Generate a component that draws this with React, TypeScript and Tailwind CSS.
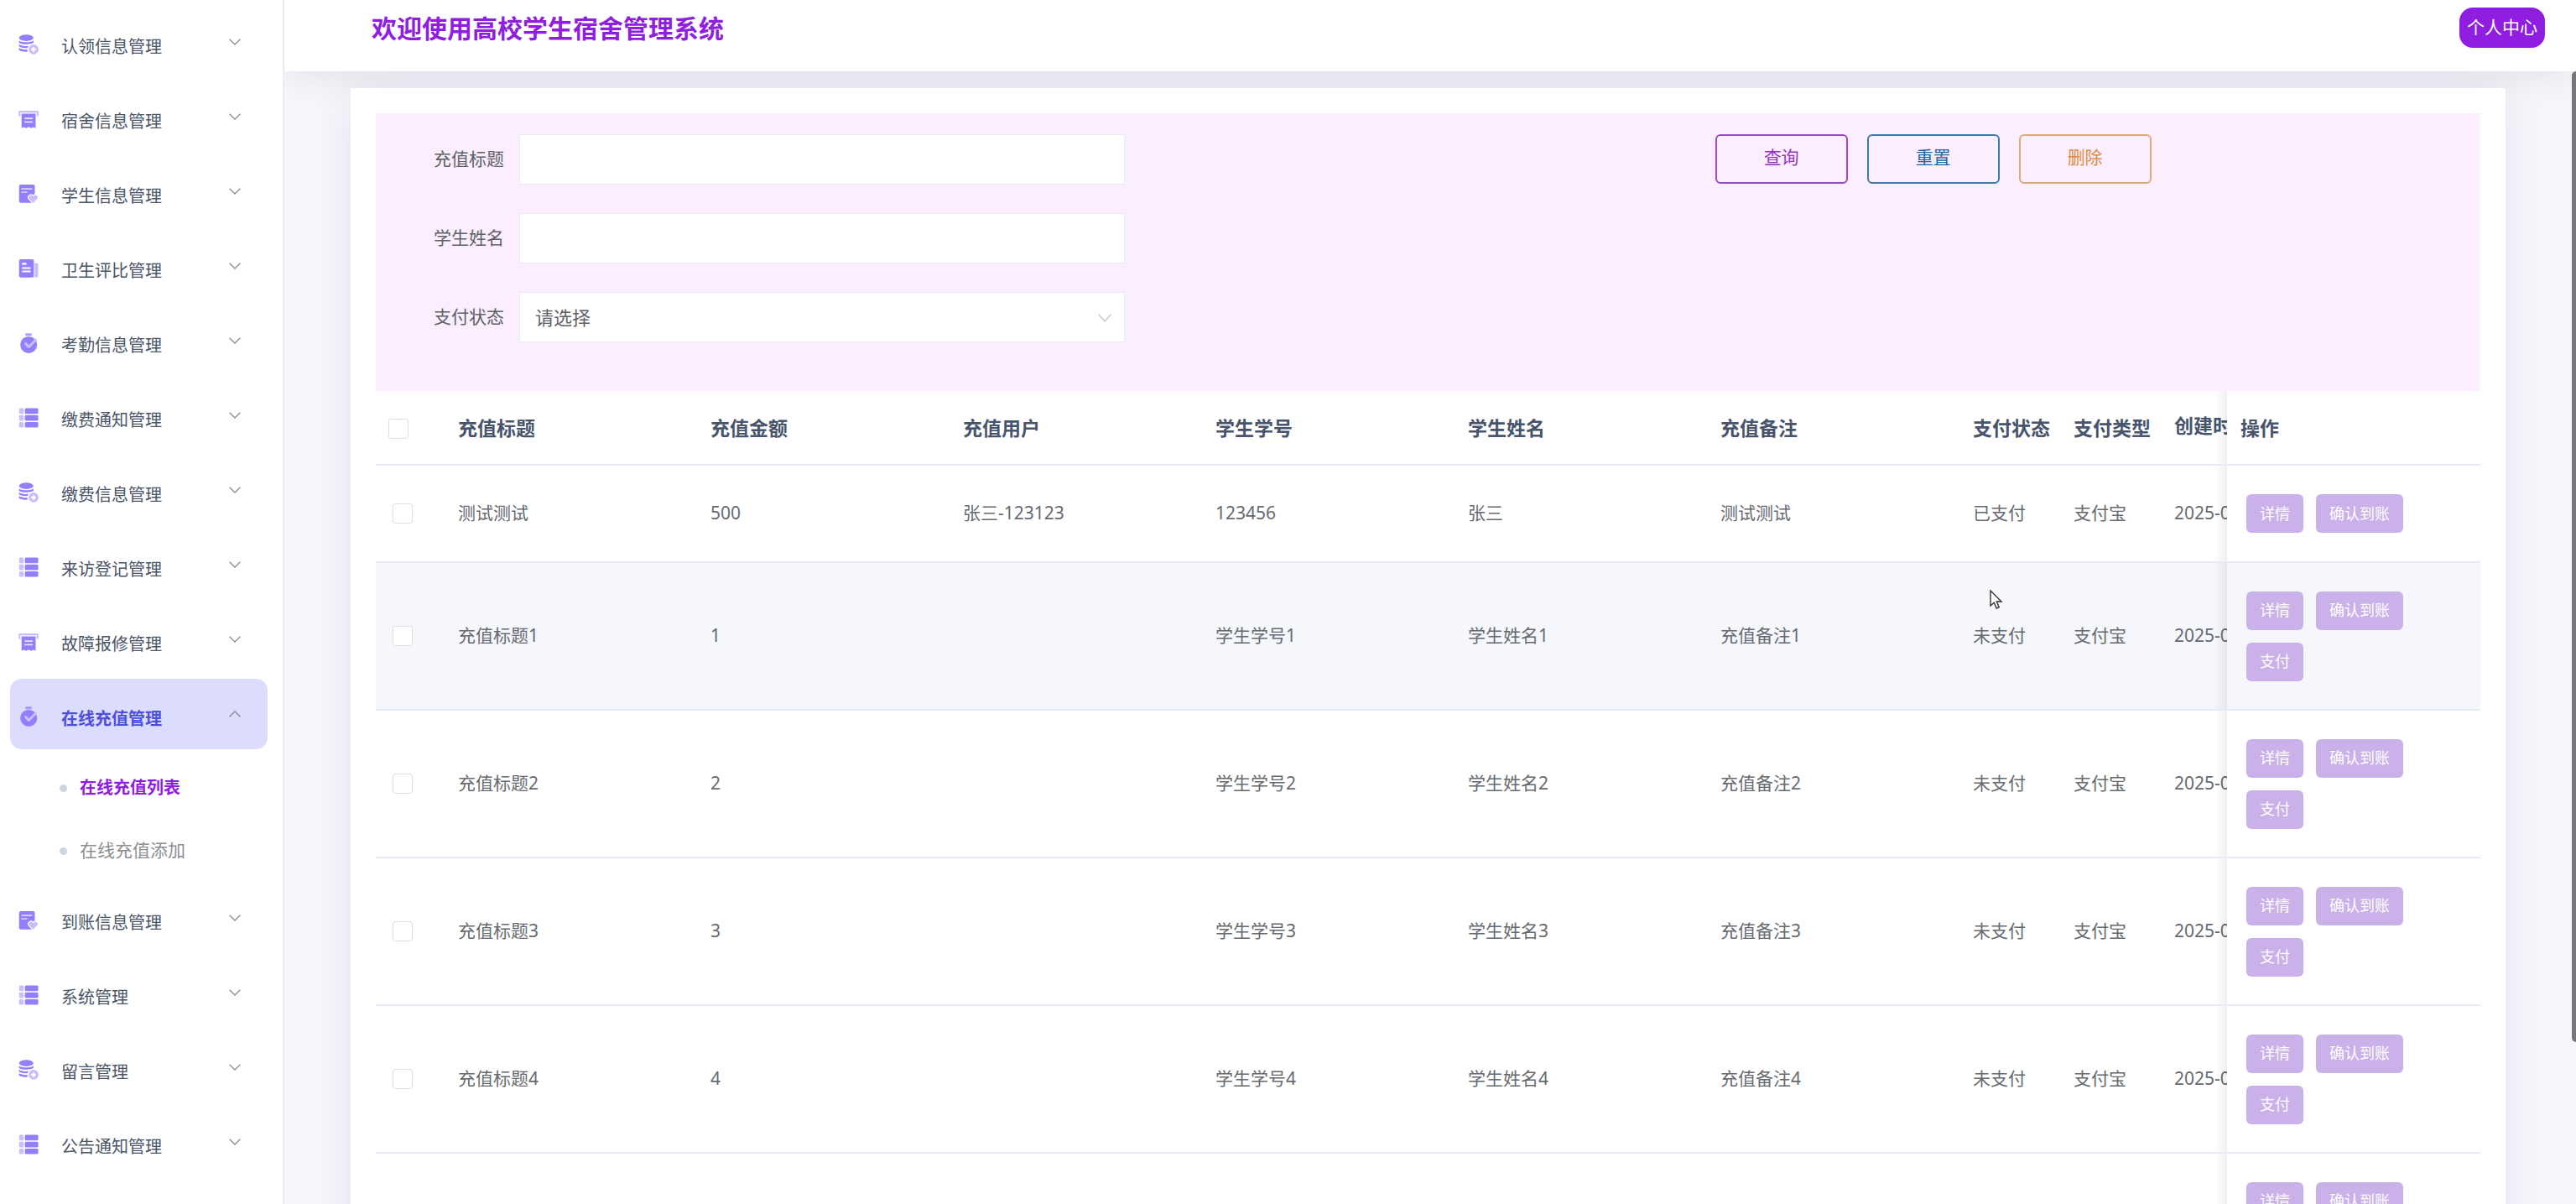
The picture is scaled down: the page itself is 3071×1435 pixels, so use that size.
import type { ReactNode } from "react";

const DARK = "#9280fb";
const LIGHT = "#cdbcfb";

function CoinsIcon() {
  return (
    <svg viewBox="0 0 24 24" className="size-6">
      <ellipse cx="9.3" cy="4.1" rx="8.6" ry="3.8" fill={DARK} />
      <path d="M.6 7.2C3.2 10 15.4 10 18 7.2V9.7C16.5 10.7 14 11.2 12 11.5C7.5 12.1 2.5 11.6.6 9.7Z" fill={DARK} />
      <path d="M.6 11.8C3 13.7 7.5 14.3 11.8 13.6L10.9 16C7 16.5 2.5 15.9.6 14.2Z" fill={DARK} />
      <path d="M.6 16.1C3 17.8 6.5 18.3 10.5 18.1L10.9 20.5C7 21.1 2 20.3.6 18.5Z" fill={DARK} />
      <circle cx="18" cy="17.9" r="4.4" fill="#fff" stroke={LIGHT} strokeWidth="3" />
      <path d="M14.9 14.8L16.6 16.5M21.1 14.8L19.4 16.5M14.9 21L16.6 19.3M21.1 21L19.4 19.3" stroke={LIGHT} strokeWidth="2" />
    </svg>
  );
}

function ReceiptIcon() {
  return (
    <svg viewBox="0 0 24 24" className="size-6">
      <path d="M1.3 8.4V3.2H22.7V8.4" fill="none" stroke={LIGHT} strokeWidth="2.2" strokeLinejoin="round" />
      <path d="M3.7 5.6H20.5V22.8L17.7 21.6L15.3 22.8L12.2 21.3L9 22.8L6.3 21.6L3.7 22.8Z" fill={DARK} />
      <path d="M7.2 11.2H17M7.2 15.3H17" stroke="#e9e2ff" strokeWidth="1.7" />
    </svg>
  );
}

function FileHeartIcon() {
  return (
    <svg viewBox="0 0 24 24" className="size-6">
      <rect x=".8" y="1" width="18.7" height="21.7" rx="2" fill={DARK} />
      <path d="M4.2 6.1H15.8M4.2 10H9.8" stroke="#dfd6ff" strokeWidth="1.7" strokeLinecap="round" />
      <path
        d="M17.6 23.6L12.5 18.4C9.8 15 14.2 11.2 17.6 14.1C21 11.2 25.4 15 22.7 18.4Z"
        fill={LIGHT}
        stroke="#fff"
        strokeWidth="1.2"
      />
    </svg>
  );
}

function NewsIcon() {
  return (
    <svg viewBox="0 0 24 24" className="size-6">
      <path d="M19.3 5.4H21.8Q23.5 5.4 23.5 7.2V20.8Q23.5 22.8 21.8 22.8H19.3Z" fill={LIGHT} />
      <rect x=".8" y="1" width="17.6" height="21.8" rx="2" fill={DARK} />
      <path d="M4.3 11.5H14.5M4.3 15.5H14.5" stroke="#fff" strokeWidth="1.8" />
      <path d="M4.3 5.2H9.5V7.6H4.3Z" fill="#fff" />
    </svg>
  );
}

function TimerIcon() {
  return (
    <svg viewBox="0 0 24 24" className="size-6">
      <rect x="8.2" y=".2" width="7.6" height="3" rx=".8" fill={DARK} opacity=".75" />
      <circle cx="12.2" cy="13.9" r="10" fill={DARK} />
      <path d="M8.6 12.6L12.4 16.5L20.5 8.2" fill="none" stroke={LIGHT} strokeWidth="3" strokeLinecap="round" strokeLinejoin="round" />
    </svg>
  );
}

function ListIcon() {
  return (
    <svg viewBox="0 0 24 24" className="size-6">
      {[0.6, 8.8, 17].map((y) => (
        <g key={y}>
          <rect x=".8" y={y} width="5.4" height="6.6" rx="1.5" fill={LIGHT} />
          <rect x="7.6" y={y} width="16" height="6.6" rx="1.5" fill={DARK} />
        </g>
      ))}
    </svg>
  );
}

function Chevron({ up = false }: { up?: boolean }) {
  return (
    <svg viewBox="0 0 14 8" className="ml-auto h-2 w-3.5 shrink-0" fill="none" stroke="#8b8e96" strokeWidth="1.3">
      <path d={up ? "M.6 7.3L7 1L13.4 7.3" : "M.6 .7L7 7L13.4 .7"} />
    </svg>
  );
}

type MenuItem = { label: string; icon: ReactNode; children?: string[] };

const menu: MenuItem[] = [
  { label: "认领信息管理", icon: <CoinsIcon /> },
  { label: "宿舍信息管理", icon: <ReceiptIcon /> },
  { label: "学生信息管理", icon: <FileHeartIcon /> },
  { label: "卫生评比管理", icon: <NewsIcon /> },
  { label: "考勤信息管理", icon: <TimerIcon /> },
  { label: "缴费通知管理", icon: <ListIcon /> },
  { label: "缴费信息管理", icon: <CoinsIcon /> },
  { label: "来访登记管理", icon: <ListIcon /> },
  { label: "故障报修管理", icon: <ReceiptIcon /> },
  { label: "在线充值管理", icon: <TimerIcon />, children: ["在线充值列表", "在线充值添加"] },
  { label: "到账信息管理", icon: <FileHeartIcon /> },
  { label: "系统管理", icon: <ListIcon /> },
  { label: "留言管理", icon: <CoinsIcon /> },
  { label: "公告通知管理", icon: <ListIcon /> },
];

const rows = [
  ["测试测试", "500", "张三-123123", "123456", "张三", "测试测试", "已支付", "支付宝", "2025-04-12"],
  ["充值标题1", "1", "", "学生学号1", "学生姓名1", "充值备注1", "未支付", "支付宝", "2025-04-12"],
  ["充值标题2", "2", "", "学生学号2", "学生姓名2", "充值备注2", "未支付", "支付宝", "2025-04-12"],
  ["充值标题3", "3", "", "学生学号3", "学生姓名3", "充值备注3", "未支付", "支付宝", "2025-04-12"],
  ["充值标题4", "4", "", "学生学号4", "学生姓名4", "充值备注4", "未支付", "支付宝", "2025-04-12"],
  ["充值标题5", "5", "", "学生学号5", "学生姓名5", "充值备注5", "未支付", "支付宝", "2025-04-12"],
];

const columns = ["充值标题", "充值金额", "充值用户", "学生学号", "学生姓名", "充值备注", "支付状态", "支付类型"];

const checkbox = "block size-6 appearance-none rounded-[3px] border border-[#dcdfe6] bg-white";
const pinned =
  "sticky right-0 before:absolute before:inset-y-0 before:right-full before:w-4 before:bg-linear-to-l before:from-black/6 before:to-transparent";
const field = "h-[60px] w-full border border-[#e8eaf2] bg-white px-[18px] text-[22px] text-[#606266] outline-none";

function Sidebar() {
  return (
    <aside className="w-[339px] shrink-0 overflow-hidden border-r-2 border-[#ebecf0] bg-white">
      <nav className="flex flex-col gap-[5px] pt-2 pr-[18px] pl-3">
        {menu.map((item) => (
          <div key={item.label}>
            <button
              type="button"
              className={
                item.children
                  ? "flex h-[84px] w-full items-center gap-[27px] rounded-[14px] bg-[#dcdcfd] pr-8 pl-2.5 text-[20px] font-bold text-[#4d50dd]"
                  : "flex h-[84px] w-full items-center gap-[27px] rounded-[14px] pr-8 pl-2.5 text-[20px] text-[#4a5568]"
              }
            >
              <span className="shrink-0 pt-1.5">{item.icon}</span>
              <span className="pt-3">{item.label}</span>
              <Chevron up={!!item.children} />
            </button>
            {item.children && (
              <ul className="flex flex-col gap-[9px] pt-[13px]">
                {item.children.map((child, i) => (
                  <li key={child}>
                    <a href="#" className="flex h-[66px] items-center gap-[15px] pl-[59px]">
                      <span className="size-[9px] rounded-full bg-[#ccd5e3]" />
                      <span className={i === 0 ? "text-[20px] font-bold text-[#8f1ee0]" : "text-[21px] text-[#8c8e94]"}>
                        {child}
                      </span>
                    </a>
                  </li>
                ))}
              </ul>
            )}
          </div>
        ))}
      </nav>
    </aside>
  );
}

function Filters() {
  return (
    <form className="grid grid-cols-[7fr_4fr] bg-[#faeeff] pt-[25px] pb-[58px]">
      <div className="flex flex-col gap-[34px] pl-[69px]">
        <div className="flex items-center gap-[18px]">
          <label htmlFor="title" className="text-[21px] text-[#606266]">充值标题</label>
          <div className="w-[722px]">
            <input id="title" type="text" className={field} />
          </div>
        </div>
        <div className="flex items-center gap-[18px]">
          <label htmlFor="student" className="text-[21px] text-[#606266]">学生姓名</label>
          <div className="w-[722px]">
            <input id="student" type="text" className={field} />
          </div>
        </div>
        <div className="flex items-center gap-[18px]">
          <label htmlFor="status" className="text-[21px] text-[#606266]">支付状态</label>
          <div className="relative w-[722px]">
            <select id="status" className={`${field} appearance-none`}>
              <option>请选择</option>
              <option>已支付</option>
              <option>未支付</option>
            </select>
            <svg viewBox="0 0 16 10" className="pointer-events-none absolute top-[26px] right-4 h-2.5 w-4" fill="none" stroke="#c0c4cc" strokeWidth="1.3">
              <path d="M.7 .8L8 9L15.3 .8" />
            </svg>
          </div>
        </div>
      </div>
      <div className="flex items-start gap-[23px] text-[21px]">
        <button type="button" className="h-[59px] w-[158px] rounded-md border-2 border-[#9a4cc0] pb-1 text-[#9432c8]">查询</button>
        <button type="button" className="h-[59px] w-[158px] rounded-md border-2 border-[#3b7ba8] pb-1 text-[#1c66a6]">重置</button>
        <button type="button" className="h-[59px] w-[158px] rounded-md border-2 border-[#dfaa78] pb-1 text-[#dd8c40]">删除</button>
      </div>
    </form>
  );
}

function ActionButton({ children }: { children: ReactNode }) {
  return (
    <button type="button" className="h-[46px] rounded-md bg-[#cbb1ea] px-4 text-[18px] text-white">
      {children}
    </button>
  );
}

function RechargeTable() {
  return (
    <div className="overflow-hidden">
      <table className="w-full min-w-[2670px] table-fixed border-separate border-spacing-0 text-left">
        <colgroup>
          <col className="w-[82px]" />
          {columns.map((name, i) => (
            <col key={name} className={i < 6 ? "w-[301px]" : "w-[120px]"} />
          ))}
          <col />
          <col className="w-[302px]" />
        </colgroup>
        <thead>
          <tr className="h-[89px] text-[23px] text-[#47546c] [&>th]:border-b-2 [&>th]:border-[#e6ebf5]">
            <th className="pt-0.5 pl-[15px]">
              <input type="checkbox" aria-label="全选" className={checkbox} />
            </th>
            {columns.map((name) => (
              <th key={name} className="pt-0.5 pl-4 font-bold whitespace-nowrap">{name}</th>
            ))}
            <th className="pb-1 pl-4 font-bold">创建时间</th>
            <th className={`${pinned} bg-white pt-0.5 pl-4 font-bold`}>操作</th>
          </tr>
        </thead>
        <tbody>
          {rows.map((row, r) => (
            <tr
              key={row[0]}
              className={
                r === 0
                  ? "h-[116px] bg-white"
                  : r === 1
                    ? "h-[176px] bg-[#f5f7fc]"
                    : "h-[176px] bg-white"
              }
            >
              <td className="border-b-2 border-[#e6ebf5] pl-5">
                <input type="checkbox" aria-label={row[0]} className={checkbox} />
              </td>
              {row.map((cell, c) => (
                <td key={c} className="border-b-2 border-[#e6ebf5] pl-4 text-[21px] whitespace-nowrap text-[#666a70]">
                  {cell}
                </td>
              ))}
              <td className={`${pinned} border-b-2 border-[#e6ebf5] bg-inherit pr-[60px] pl-[23px]`}>
                <div className="flex flex-wrap gap-[15px]">
                  <ActionButton>详情</ActionButton>
                  <ActionButton>确认到账</ActionButton>
                  {r > 0 && <ActionButton>支付</ActionButton>}
                </div>
              </td>
            </tr>
          ))}
        </tbody>
      </table>
    </div>
  );
}

export default function App() {
  return (
    <div className="relative flex h-screen overflow-hidden bg-[#f6f7fc] font-['Noto_Sans','Noto_Sans_CJK_SC',sans-serif]">
      <Sidebar />
      <div className="flex min-w-0 flex-1 flex-col overflow-hidden">
        <header className="h-[85px] shrink-0 bg-white pt-[9px] pr-[37px] pl-[104px] shadow-[0_8px_40px_rgba(0,0,0,0.08)]">
          <div className="flex h-12 items-center justify-between">
            <h1 className="text-[30px] font-bold text-[#8f1ee0]">欢迎使用高校学生宿舍管理系统</h1>
            <button type="button" className="h-12 rounded-2xl bg-[#8f1ee0] px-[9px] text-[21px] text-white">
              个人中心
            </button>
          </div>
        </header>
        <main className="relative min-h-0 flex-1 overflow-hidden pt-5 pr-[84px] pl-[79px]">
          <section className="bg-white p-[30px] shadow-[0_0_50px_rgba(30,30,80,0.08)]">
            <Filters />
            <RechargeTable />
          </section>
          <div className="absolute top-0 right-0 h-6/7 w-[5px] rounded-l-full bg-[#77777a]" />
        </main>
      </div>
      <svg viewBox="0 0 16 24" className="pointer-events-none absolute top-[703px] left-[2372px] h-6 w-4" fill="#fff" stroke="#333" strokeWidth="1.4">
        <path d="M1 1V19L5.2 15.2L8.2 22L11.2 20.7L8.3 14H14Z" />
      </svg>
    </div>
  );
}
